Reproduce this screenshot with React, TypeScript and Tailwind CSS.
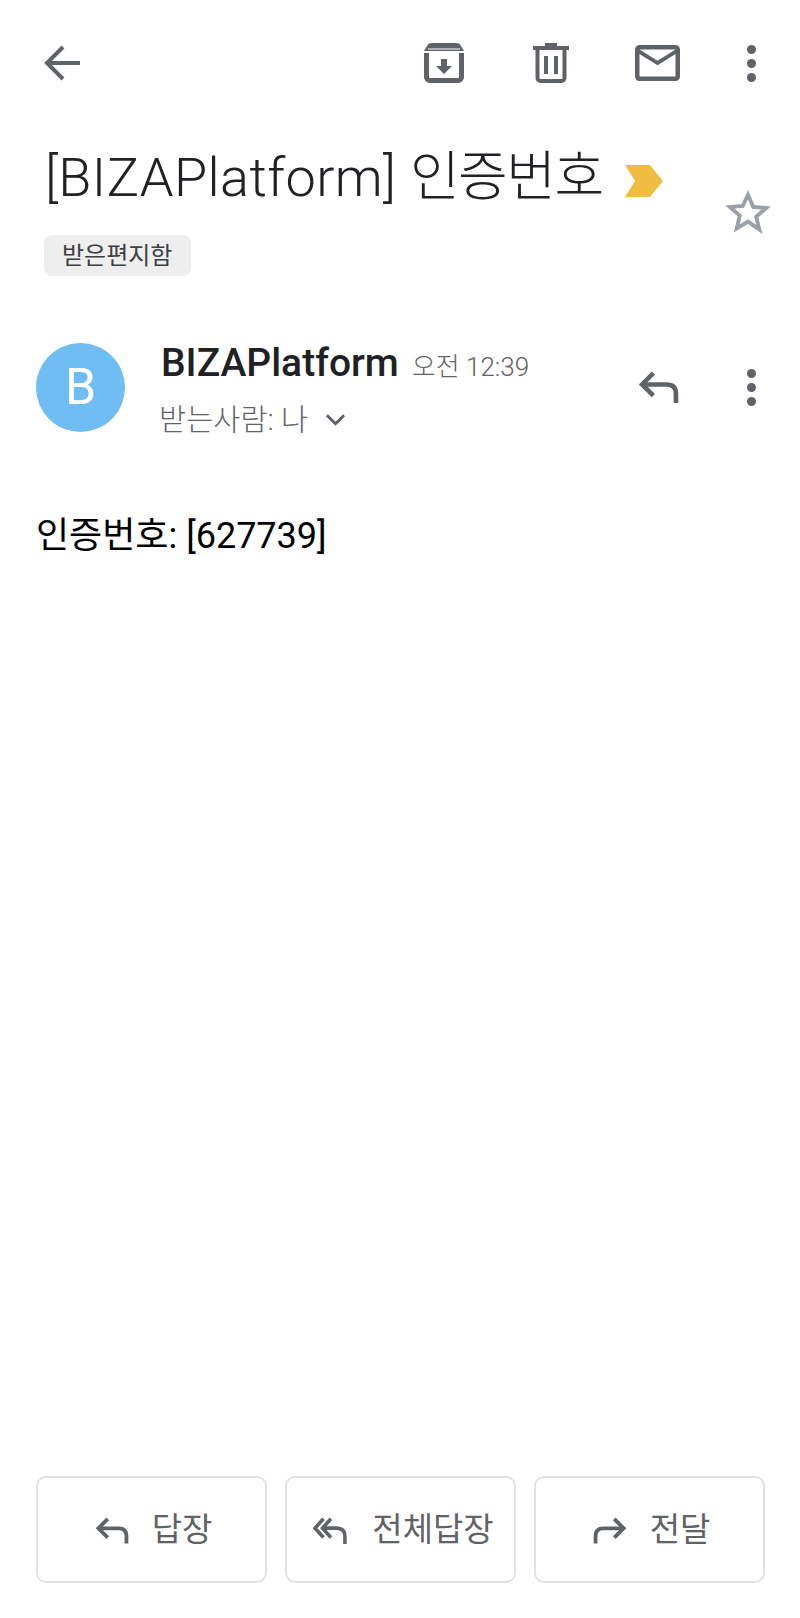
import React from "react";

const KR = "font-['Roboto','Noto_Sans_CJK_KR',sans-serif]";

const ReplyIcon = ({ className }: { className: string }) => (
  <svg viewBox="0 0 40 32" fill="none" stroke="#5f6368" strokeWidth="4.5" className={className}>
    <path d="M15 3 4 14l11 11" />
    <path d="M4 14h24c6 0 9 3 9 9v9" />
  </svg>
);

const ReplyAllIcon = ({ className }: { className: string }) => (
  <svg viewBox="0 0 38 30" fill="none" stroke="#5f6368" strokeWidth="3.8" className={className}>
    <path d="M12 3 3 13l9 10" />
    <path d="M20 3 11 13l9 10" />
    <path d="M11 13h15c6 0 9 3 9 9v8" />
  </svg>
);

const ForwardIcon = ({ className }: { className: string }) => (
  <svg viewBox="0 0 40 32" fill="none" stroke="#5f6368" strokeWidth="4.5" className={className}>
    <path d="M25 3l11 11-11 11" />
    <path d="M36 14H12c-6 0-9 3-9 9v9" />
  </svg>
);

const Dots = () => (
  <div className="flex flex-col gap-[5px]">
    <div className="w-[9px] h-[9px] rounded-full bg-[#5f6368]" />
    <div className="w-[9px] h-[9px] rounded-full bg-[#5f6368]" />
    <div className="w-[9px] h-[9px] rounded-full bg-[#5f6368]" />
  </div>
);

const ActionButton = ({ icon, label }: { icon: React.ReactNode; label: string }) => (
  <div className="w-[231px] h-[107px] flex items-center justify-center gap-[23px] pl-[4px] border-2 border-[#dfe1e3] rounded-[10px]">
    {icon}
    <span className="text-[33px] text-[#5f6368]">{label}</span>
  </div>
);

export default function App() {
  return (
    <div className={`${KR} relative w-[800px] h-[1618px] bg-white flex flex-col overflow-hidden`}>
      {/* toolbar */}
      <div className="flex items-center h-[62px] mt-[32px] pl-[43px] pr-[44px]">
        <svg viewBox="0 0 38 38" fill="none" stroke="#5f6368" strokeWidth="4" className="w-[38px] h-[38px]">
          <path d="M37 19H4" />
          <path d="M20 3 4 19l16 16" />
        </svg>
        <div className="ml-auto flex items-center">
          <svg viewBox="0 0 40 40" fill="none" className="w-[40px] h-[40px]">
            <path d="M2.500 10v24a3.500 3.500 0 0 0 3.500 3.500h28a3.500 3.500 0 0 0 3.500-3.500V10" stroke="#5f6368" strokeWidth="5" />
            <path d="M0 8l3-5c1-2 2-3 5-3h24c3 0 4 1 5 3l3 5z" fill="#5f6368" />
            <path d="M4 6h32" stroke="#fff" strokeWidth="1" />
            <path d="M17 16h6v7h5l-8 8-8-8h5z" fill="#5f6368" />
          </svg>
          <svg viewBox="0 0 36 40" fill="none" className="w-[36px] h-[40px] ml-[69px]">
            <path d="M12 3V0h12v3h12v4H0V3z" fill="#5f6368" />
            <path d="M4.500 7v28a3 3 0 0 0 3 3h21a3 3 0 0 0 3-3V7" stroke="#5f6368" strokeWidth="4" />
            <path d="M13 13v18M23 13v18" stroke="#5f6368" strokeWidth="4" />
          </svg>
          <svg viewBox="2 4 20 16" className="w-[45px] h-[36px] ml-[66px]" fill="#5f6368">
            <path d="M20 4H4c-1.100 0-1.990.9-1.990 2L2 18c0 1.100.9 2 2 2h16c1.100 0 2-.9 2-2V6c0-1.100-.9-2-2-2zm0 14H4V8l8 5 8-5v10zm-8-7L4 6h16l-8 5z" />
          </svg>
          <div className="ml-[67px]">
            <Dots />
          </div>
        </div>
      </div>

      {/* subject */}
      <div className="flex items-center pl-[45px] mt-[54px] h-[60px]">
        <h1 className="text-[54px] leading-[60px] font-light text-[#202124] whitespace-nowrap">
          <span className="tracking-[0.4px]">[BIZAPlatform] </span>
          <span className="tracking-[-1.5px]">인증번호</span>
        </h1>
        <svg viewBox="0 0 38 32" className="w-[38px] h-[32px] ml-[22px] mt-[6px]">
          <path d="M0 0h25l13 16-13 16H0l10-16z" fill="#f0bd40" />
        </svg>
      </div>
      <div className="flex justify-between items-start pl-[44px] pr-[29px] -mt-[19px]">
        <div className="mt-[46px] h-[41px] pl-[18px] pr-[19px] flex items-center rounded-[8px] bg-[#eeeeee] text-[24px] text-[#3c4043]">
          받은편지함
        </div>
        <svg viewBox="0 0 24 24" fill="none" stroke="#9aa0a6" strokeWidth="2" className="w-[46px] h-[46px]">
          <path d="M12 3l2.700 6.300 6.800.6-5.200 4.500 1.600 6.700L12 17l-5.900 3.600 1.600-6.700-5.200-4.500 6.800-.6z" />
        </svg>
      </div>

      {/* sender */}
      <div className="flex items-center h-[89px] mt-[67px] pl-[36px] pr-[44px]">
        <div className="w-[89px] h-[89px] rounded-full bg-[#6fbdf3] flex items-center justify-center text-white text-[50px] font-normal">
          B
        </div>
        <div className="ml-[36px] flex flex-col self-start -mt-[2px]">
          <div className="flex items-baseline gap-[13px]">
            <span className="text-[39px] leading-[44px] font-medium text-[#202124]">BIZAPlatform</span>
            <span className="text-[26px] text-[#5f6368] font-light">오전 12:39</span>
          </div>
          <div className="flex items-center mt-[13px] -ml-[2px]">
            <span className="text-[29.5px] leading-[40px] text-[#5f6368] font-light">받는사람: 나</span>
            <svg viewBox="0 0 22 14" fill="none" stroke="#5f6368" strokeWidth="3" className="w-[21px] h-[14px] ml-[17px]">
              <path d="M2 2l9 9 9-9" />
            </svg>
          </div>
        </div>
        <ReplyIcon className="w-[41px] h-[33px] ml-auto mb-[2px]" />
        <div className="ml-[68px]">
          <Dots />
        </div>
      </div>

      {/* body */}
      <p className="mt-[80px] pl-[36px] text-[36px] leading-[48px] text-black">인증번호: [627739]</p>

      {/* actions */}
      <div className="mt-auto mb-[35px] flex justify-between pl-[36px] pr-[35px]">
        <ActionButton icon={<ReplyIcon className="w-[34px] h-[28px]" />} label="답장" />
        <ActionButton icon={<ReplyAllIcon className="w-[38px] h-[28px]" />} label="전체답장" />
        <ActionButton icon={<ForwardIcon className="w-[34px] h-[28px]" />} label="전달" />
      </div>
    </div>
  );
}
